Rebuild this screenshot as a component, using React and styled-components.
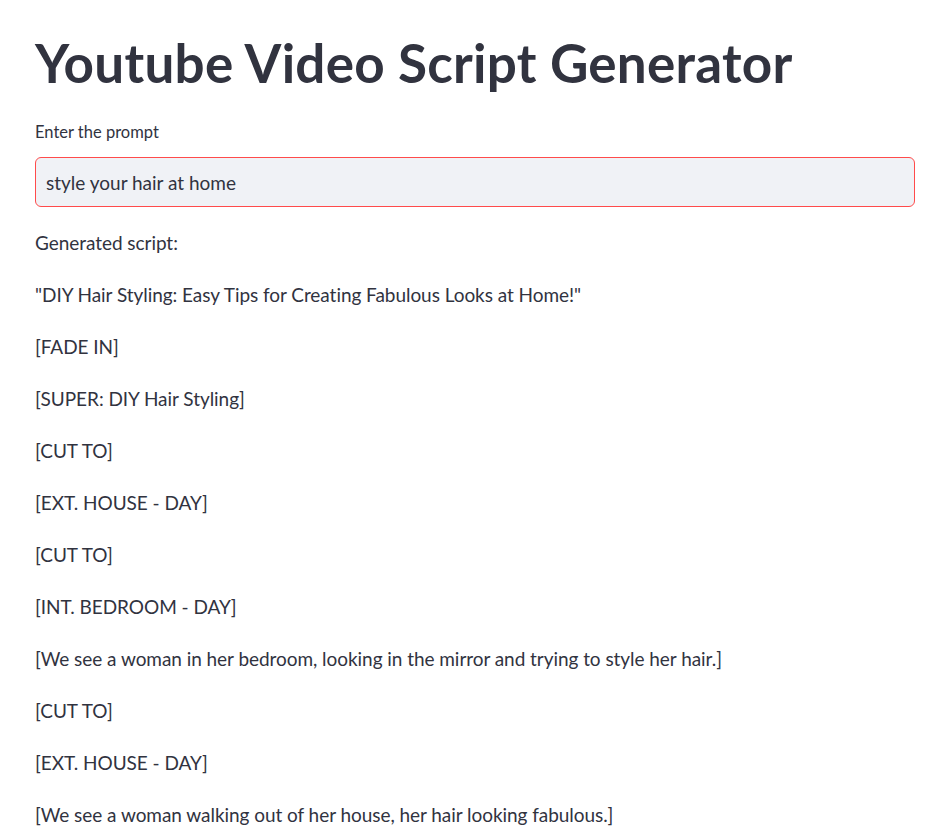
import React from 'react';
import styled, { createGlobalStyle } from 'styled-components';

const scriptLines = [
    'Generated script:',
    '"DIY Hair Styling: Easy Tips for Creating Fabulous Looks at Home!"',
    '[FADE IN]',
    '[SUPER: DIY Hair Styling]',
    '[CUT TO]',
    '[EXT. HOUSE - DAY]',
    '[CUT TO]',
    '[INT. BEDROOM - DAY]',
    '[We see a woman in her bedroom, looking in the mirror and trying to style her hair.]',
    '[CUT TO]',
    '[EXT. HOUSE - DAY]',
    '[We see a woman walking out of her house, her hair looking fabulous.]',
];

const App = () => {
    return (
        <>
            <GlobalStyle />
            <StyledMain>
                <Title>Youtube Video Script Generator</Title>
                <Field>
                    <Label htmlFor="prompt">Enter the prompt</Label>
                    <TextInput id="prompt" type="text" defaultValue="style your hair at home" />
                </Field>
                <Output>
                    {scriptLines.map((line, i) => (
                        <Para key={i}>{line}</Para>
                    ))}
                </Output>
            </StyledMain>
        </>
    );
};

const GlobalStyle = createGlobalStyle`
    html, body {
        margin: 0;
        padding: 0;
        background: #fff;
        overflow: hidden;
    }
    body {
        font-family: Lato, "Noto Sans", sans-serif;
        color: #31333f;
    }
`;

const StyledMain = styled.main`
    display: flex;
    flex-direction: column;
    width: 880px;
    padding: 31px 0 0 35px;
`;

const Title = styled.h1`
    margin: 0;
    font-size: 53px;
    font-weight: 700;
    line-height: 64px;
    letter-spacing: 0.25px;
    color: #31333f;
`;

const Field = styled.div`
    display: flex;
    flex-direction: column;
    gap: 15px;
    margin: 27px 0 0 0;
`;

const Label = styled.label`
    font-size: 16.5px;
    line-height: 20px;
    color: #31333f;
`;

const TextInput = styled.input`
    box-sizing: border-box;
    width: 100%;
    height: 50px;
    padding: 0 10px;
    font-family: Lato, "Noto Sans", sans-serif;
    font-size: 19px;
    color: #31333f;
    background-color: #f0f2f6;
    border: 1px solid #ff4b4b;
    border-radius: 6px;
    outline: none;
`;

const Output = styled.div`
    display: flex;
    flex-direction: column;
    gap: 20px;
    margin: 20px 0 0 0;
`;

const Para = styled.p`
    margin: 0;
    font-size: 19px;
    line-height: 32px;
    letter-spacing: -0.05px;
    color: #31333f;
    white-space: nowrap;
`;

export default App;
